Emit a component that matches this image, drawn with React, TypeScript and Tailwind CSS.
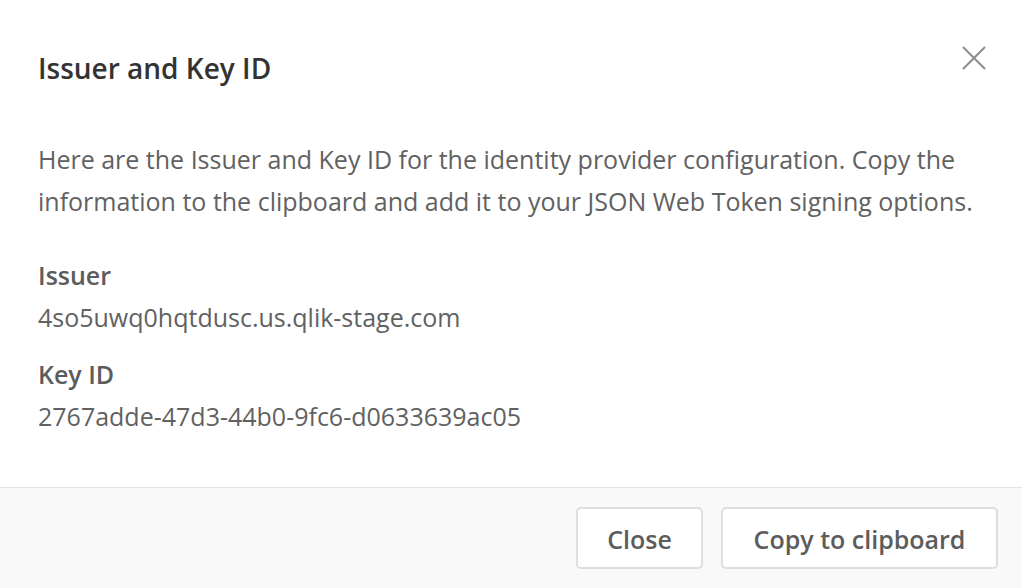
import React from "react";

export default function App() {
  return (
    <div className="w-[1022px] h-[588px] bg-white flex flex-col overflow-hidden" style={{ fontFamily: "'Open Sans', 'Noto Sans', sans-serif" }}>
      <div className="flex-1 flex flex-col px-[38px]">
        <div className="flex items-start justify-between pt-[48px]">
          <h1 className="text-[28px] leading-[40px] font-semibold text-[#333333]">Issuer and Key ID</h1>
          <button className="mt-[-2px] mr-[-2px] text-[#8c8c8c]" aria-label="Close">
            <svg width="24" height="24" viewBox="0 0 24 24" fill="none" stroke="currentColor" strokeWidth="2" strokeLinecap="round">
              <path d="M1.5 1.5 L22.5 22.5 M22.5 1.5 L1.5 22.5" />
            </svg>
          </button>
        </div>
        <p className="mt-[50px] text-[25px] leading-[42px] text-[#616161]">
          Here are the Issuer and Key ID for the identity provider configuration. Copy the information to the clipboard and add it to your JSON Web Token signing options.
        </p>
        <div className="mt-[32px] text-[25px] leading-[42px] font-semibold text-[#5c5c5c]">Issuer</div>
        <div className="text-[25px] leading-[42px] text-[#616161]">4so5uwq0hqtdusc.us.qlik-stage.com</div>
        <div className="mt-[15px] text-[25px] leading-[42px] font-semibold text-[#5c5c5c]">Key ID</div>
        <div className="text-[25px] leading-[42px] text-[#616161]">2767adde-47d3-44b0-9fc6-d0633639ac05</div>
      </div>
      <div className="h-[101px] border-t border-[#e3e3e3] bg-[#f9f9f9] flex items-center justify-end gap-[18px] pr-[24px]">
        <button className="h-[62px] w-[127px] pt-[4px] rounded-[5px] border-[2px] border-[#dedede] bg-white text-[25px] font-semibold text-[#5c5c5c]">Close</button>
        <button className="h-[62px] w-[277px] pt-[4px] rounded-[5px] border-[2px] border-[#dedede] bg-white text-[25px] font-semibold text-[#5c5c5c]">Copy to clipboard</button>
      </div>
    </div>
  );
}
